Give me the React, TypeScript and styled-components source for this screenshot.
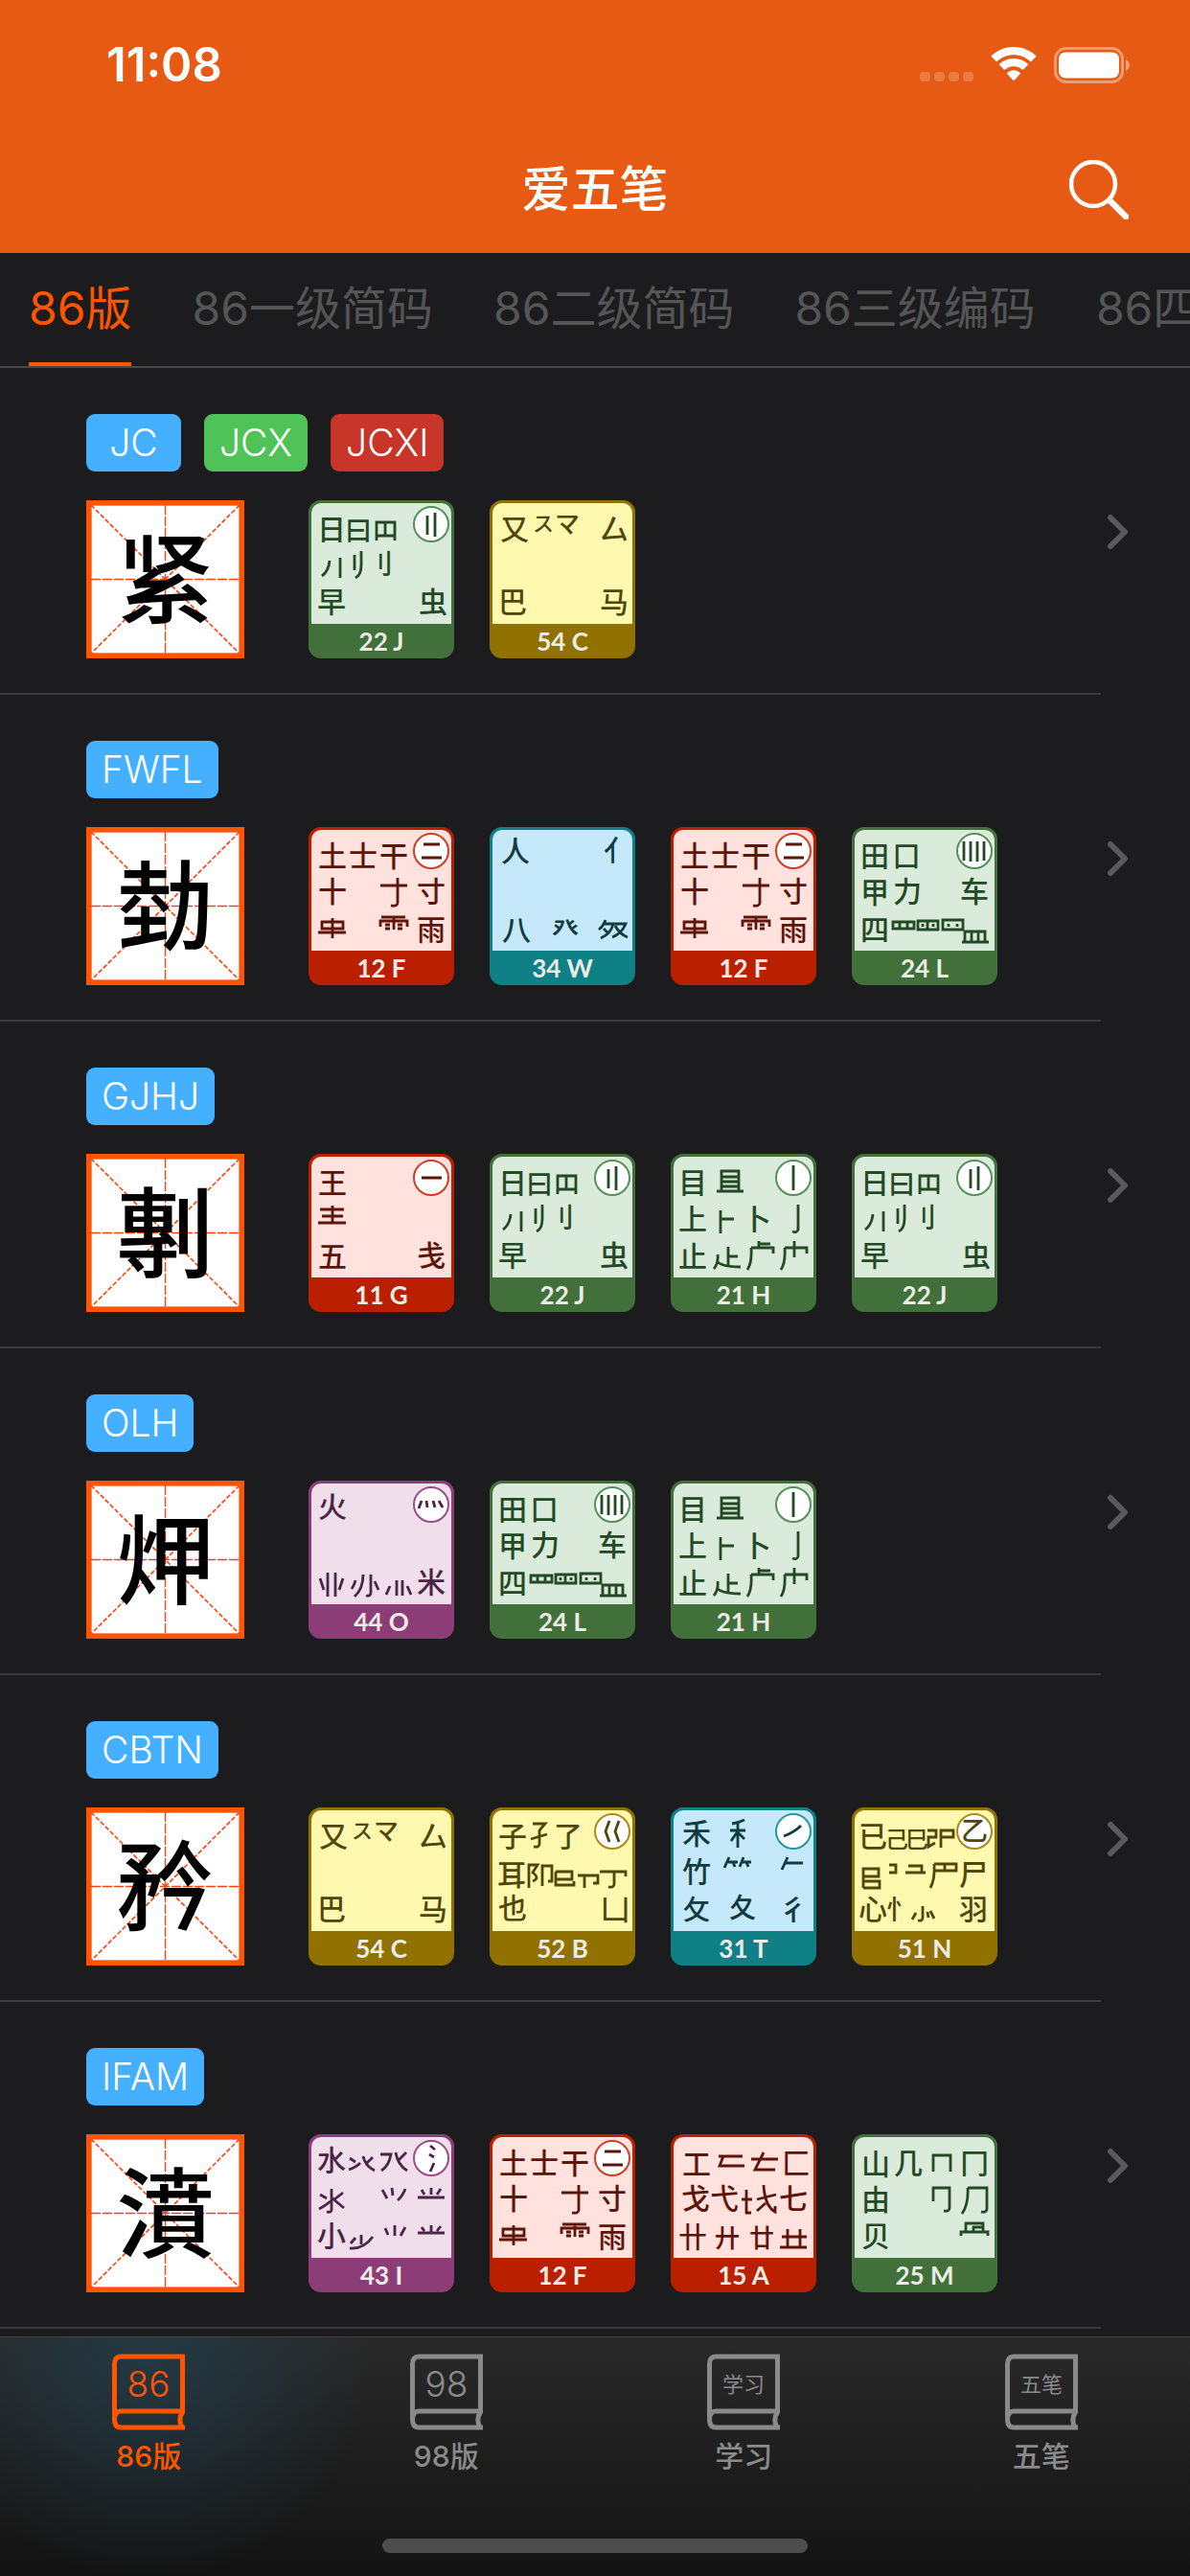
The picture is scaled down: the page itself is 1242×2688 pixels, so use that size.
import React from 'react';
import styled, { createGlobalStyle } from 'styled-components';

const GlobalStyle = createGlobalStyle`
  * { box-sizing: border-box; }
  html, body { margin: 0; background: #1c1c1e; }
  body { font-family: Inter, "Noto Sans CJK SC", sans-serif; color: #fff; }
  button { font: inherit; border: 0; background: none; padding: 0; cursor: pointer; }
  a { color: inherit; text-decoration: none; }
  svg { display: block; }
`;

/* ---------- page parts ---------- */

const Page = styled.div`
  min-height: 100vh;
  display: flex;
  flex-direction: column;
  overflow-x: hidden;
`;

const Header = styled.header`
  background: #e65a14;
  height: 264px;
`;

const StatusBar = styled.div`
  height: 136px;
  padding: 0 62px 0 111px;
  display: flex;
  justify-content: space-between;
  align-items: center;
`;

const Clock = styled.time`
  font-size: 49px;
  line-height: 60px;
  font-weight: 600;
`;

const StatusIcons = styled.div`
  display: flex;
  align-items: center;
`;

const NavBar = styled.div`
  height: 124px;
  padding: 0 64px;
  display: grid;
  grid-template-columns: 62px 1fr 62px;
  align-items: center;
`;

const Title = styled.h1`
  grid-column: 2;
  margin: 0;
  text-align: center;
  font-size: 51px;
  line-height: 72px;
  font-weight: 500;
`;

const TabStrip = styled.nav`
  display: flex;
  gap: 63px;
  height: 120px;
  padding: 0 30px;
  overflow: hidden;
  border-bottom: 2px solid #48484a;
`;

const StripTab = styled.button<{ $active?: boolean }>`
  flex: none;
  height: 118px;
  padding-top: 2px;
  white-space: nowrap;
  font-size: 48px;
  line-height: 72px;
  font-weight: 400;
  color: ${p => (p.$active ? '#ff5500' : '#555')};
  border-bottom: 4px solid ${p => (p.$active ? '#ff5500' : 'transparent')};
`;

const List = styled.ul`
  list-style: none;
  margin: 0;
  padding: 0;
`;

const Row = styled.a`
  display: grid;
  grid-template-columns: 1fr 93px;
  align-items: center;
`;

const RowBody = styled.div`
  display: flex;
  flex-direction: column;
  gap: 30px;
  padding: 48px 0 36px 90px;
  border-bottom: 2px solid #3a3a3c;
`;

const Tags = styled.div`
  display: flex;
  gap: 24px;
`;

const Tag = styled.span<{ $color: string }>`
  min-width: 99px;
  padding: 0 16px;
  border-radius: 9px;
  background: ${p => p.$color};
  font-size: 39px;
  line-height: 60px;
  font-weight: 300;
  text-align: center;
`;

const Pieces = styled.div`
  display: flex;
  align-items: center;
  gap: 67px;
`;

const Keys = styled.div`
  display: flex;
  gap: 37px;
`;

const Tile = styled.div`
  display: grid;
  width: 165px;
  height: 165px;
  border: 5px solid #ff5500;
  background: #fff;
  & > * { grid-area: 1 / 1; }
`;

const Hanzi = styled.span`
  color: #000;
  font-family: "Noto Sans CJK SC", sans-serif;
  font-size: 102px;
  line-height: 144px;
  font-weight: 500;
  text-align: center;
`;

const KeyCap = styled.figure<{ $edge: string; $face: string }>`
  margin: 0;
  width: 152px;
  height: 165px;
  overflow: hidden;
  border-radius: 13px;
  background: ${p => p.$edge};
  & > svg {
    border: 3px solid ${p => p.$edge};
    border-bottom: 0;
    border-radius: 13px 13px 0 0;
    background: ${p => p.$face};
  }
`;

const KeyCode = styled.figcaption`
  font-family: Lato, sans-serif;
  font-size: 26px;
  line-height: 36px;
  font-weight: 700;
  text-align: center;
  color: #ecece6;
`;

const TabBar = styled.footer`
  margin-top: auto;
  height: 250px;
  border-top: 1px solid #434345;
  background:
    radial-gradient(circle 230px at 155px 20px, rgba(32, 72, 92, 0.55), rgba(32, 72, 92, 0) 100%),
    linear-gradient(#292929, #131313);
`;

const TabBarItems = styled.nav`
  display: grid;
  grid-template-columns: repeat(4, 1fr);
  height: 210px;
  padding-top: 17px;
`;

const BarItem = styled.button<{ $active?: boolean }>`
  display: flex;
  flex-direction: column;
  align-items: center;
  gap: 7px;
  color: ${p => (p.$active ? '#ff5500' : '#8a8a8a')};
  font-size: 30px;
  line-height: 40px;
  font-weight: 500;
`;

const HomeIndicator = styled.div`
  width: 444px;
  height: 15px;
  margin: 0 auto;
  border-radius: 8px;
  background: #4d4d4d;
`;

/* ---------- icons ---------- */

const Dots = () => (
  <svg width="56" height="38" viewBox="0 0 56 38" fill="#fff" fillOpacity="0.2">
    {[0, 15, 30, 45].map(x => <rect key={x} x={x} y="26" width="11" height="10" rx="4" />)}
  </svg>
);

const Wifi = () => (
  <svg width="48" height="38" viewBox="0 0 48 38" fill="#fff" style={{ marginLeft: 18 }}>
    <path d="M24 8.2c6.6 0 12.700 2.600 17.200 6.800.4.400.9.300 1.200 0l4.700-4.700c.4-.4.4-.9 0-1.300C41 3.400 32.900 0 24 0S7 3.400.9 9c-.4.400-.4.900 0 1.300L5.600 15c.3.300.8.400 1.200 0C11.300 10.800 17.400 8.200 24 8.200z" />
    <path d="M24 20.300c3.400 0 6.500 1.200 8.900 3.300.3.300.8.300 1.200 0l4.600-4.700c.4-.4.4-1 0-1.300C34.800 14.200 29.700 12 24 12s-10.800 2.200-14.700 5.600c-.4.300-.4.900 0 1.300l4.600 4.700c.4.300.9.300 1.200 0 2.400-2.100 5.500-3.300 8.900-3.300z" />
    <path d="M30.600 27c.4.300.4.800 0 1.200l-6 6.500c-.4.400-.8.400-1.200 0l-6-6.500c-.4-.4-.4-.9 0-1.200 4-3.600 9.200-3.600 13.200 0z" />
  </svg>
);

const Battery = () => (
  <svg width="80" height="38" viewBox="0 0 80 38" style={{ marginLeft: 18 }}>
    <rect x="1.500" y="1.500" width="70" height="35" rx="11" fill="none" stroke="#fff" strokeOpacity="0.4" strokeWidth="3" />
    <rect x="5" y="5.500" width="63" height="27" rx="7" fill="#fff" />
    <path d="M75 13c5 2 5 10 0 12z" fill="#fff" fillOpacity="0.45" />
  </svg>
);

const SearchIcon = () => (
  <svg width="62" height="62" viewBox="0 0 62 62" fill="none" stroke="#fff" strokeLinecap="round">
    <circle cx="25" cy="25" r="23" strokeWidth="4.500" />
    <path d="M42 42 59 59" strokeWidth="6.500" />
  </svg>
);

const Chevron = () => (
  <svg width="35" height="38" viewBox="0 0 35 38" fill="none" stroke="#5a5a5e" strokeWidth="6" strokeLinecap="round" strokeLinejoin="round">
    <path d="M10 4 25 19 10 34" />
  </svg>
);

const BookIcon = ({ text, small }: { text: string; small?: boolean }) => (
  <svg width="78" height="80" viewBox="0 0 78 80" fill="none" stroke="currentColor" strokeWidth="5">
    <path d="M77 3H10Q3.500 3 3.500 11V68Q3.500 77 10 77H77" />
    <path d="M74.500 1V61Q69 69 74.500 78" />
    <path d="M3.500 68Q4 60 10 60H76" />
    <text x="39" y={small ? 40 : 45} textAnchor="middle" fill="currentColor" stroke="none" fontSize={small ? 22 : 37} fontWeight={small ? 400 : 300}>{text}</text>
  </svg>
);

const PracticeGrid = () => (
  <svg width="155" height="155" viewBox="0 0 155 155" fill="none" stroke="#ff4010">
    <rect x="0.500" y="0.500" width="154" height="154" strokeOpacity="0.6" />
    <path d="M0 77.500H155M77.500 0V155" strokeDasharray="10 2" strokeWidth="1.400" />
    <path d="M0 0 155 155M155 0 0 155" strokeDasharray="5 2" strokeWidth="1.600" />
  </svg>
);

/* ---------- key faces ---------- */

type Glyph = [char: string, x: number, y: number, size?: number];
interface KeyDef { code: string; tone: Tone; glyphs: Glyph[]; strokes?: string; ring?: string; ringGlyph?: string }
type Tone = 'green' | 'yellow' | 'red' | 'blue' | 'purple';

const tones: Record<Tone, { edge: string; face: string; ink: string; ring: string }> = {
  green: { edge: '#41703a', face: '#dbebdb', ink: '#234a25', ring: '#55905a' },
  yellow: { edge: '#917200', face: '#fff9b0', ink: '#51460c', ring: '#a88a1c' },
  red: { edge: '#ba1f00', face: '#ffe1dd', ink: '#5e150b', ring: '#d23c24' },
  blue: { edge: '#0f8085', face: '#c5e9fa', ink: '#103c40', ring: '#2a979b' },
  purple: { edge: '#8c3d78', face: '#f1deeb', ink: '#4a2547', ring: '#9a4c88' },
};

const keyDefs: Record<string, KeyDef> = {
  J: {
    code: '22 J', tone: 'green',
    glyphs: [['日', 24, 30], ['曰', 52, 31, 28], ['刂', 74, 66, 28], ['早', 24, 106], ['虫', 130, 106]],
    strokes: 'M71 42V23H90V42M71 37H90M80 23V37M22 63Q21 74 14 79M33 60V81M48 57V73M55 53V68Q55 78 49 81',
    ring: 'M124 16V36M132 13V38',
  },
  C: {
    code: '54 C', tone: 'yellow',
    glyphs: [['又', 26, 30], ['ス', 56, 24, 22], ['マ', 81, 24, 26], ['厶', 130, 30], ['巴', 24, 106], ['马', 130, 106]],
  },
  F: {
    code: '12 F', tone: 'red',
    glyphs: [['土', 25, 30], ['士', 57, 30], ['干', 89, 30], ['十', 25, 67], ['寸', 128, 67], ['雨', 128, 107]],
    strokes: 'M75 61H103M93 53V79Q93 83 86 82M14 99H36V106H14ZM10 110H39M25 95V116M76 94H101M75 104V98H103V104M89 94V107M80 102H85M80 106H85M93 102H98M93 106H98',
    ring: 'M120 18H137M118 32H139',
  },
  W: {
    code: '34 W', tone: 'blue',
    glyphs: [['人', 27, 25], ['亻', 134, 24], ['八', 28, 107], ['癶', 79, 106, 28]],
    strokes: 'M121 97Q119 103 114 107M120 101H129Q127 111 116 116M119 106 123 110M130 101H142Q138 111 128 115M131 103Q136 112 144 115',
  },
  L: {
    code: '24 L', tone: 'green',
    glyphs: [['田', 24, 30], ['囗', 57, 30, 28], ['甲', 24, 68], ['力', 58, 67], ['车', 128, 67], ['四', 24, 107]],
    strokes: 'M43 99H65V106H43ZM50 99V106M58 99V106M69 98H90V107H69ZM79 98V107M74 101V104M85 101V104M95 97H116V107H95ZM101 101V104M110 101V104M118 120V109H139V120M125 109V120M132 109V120M115 120H143',
    ring: 'M117 15V35M124 15V36M131 15V36M138 15V35',
  },
  G: {
    code: '11 G', tone: 'red',
    glyphs: [['王', 25, 30], ['五', 25, 107], ['戋', 128, 106]],
    strokes: 'M12 58H37M14 65H36M10 72H39M25 54V72',
    ring: 'M118 25H139',
  },
  H: {
    code: '21 H', tone: 'green',
    glyphs: [['目', 23, 30], ['上', 23, 68], ['卜', 90, 68], ['止', 23, 107]],
    strokes: 'M53 39V18H71V39M53 24H71M53 29H71M53 34H71M48 39H76M52 59V83M52 68H66M133 53V79Q132 83 127 81M49 105Q50 114 45 120M49 113Q55 118 73 118M60 97V117M60 107H70M84 98H107V104M84 98Q85 114 80 121M92 91V98M92 94H104M119 98H142V104M119 98Q120 114 115 121M129 91V108',
    ring: 'M128 12V38',
  },
  O: {
    code: '44 O', tone: 'purple',
    glyphs: [['火', 25, 27], ['米', 128, 106]],
    strokes: 'M20 96V121M28 96V121M12 102 16 114M36 102 32 114M57 98Q57 113 48 121M49 104Q48 109 45 113M65 98V117Q65 121 60 120M69 105 73 114M85 110 81 119M92 104V120M98 104V120M103 110 107 119',
    ring: 'M118 21 115 29M123 21 124 28M130 21 132 28M136 21 140 28',
  },
  B: {
    code: '52 B', tone: 'yellow',
    glyphs: [['子', 24, 30], ['了', 82, 30], ['耳', 23, 70], ['也', 24, 105], ['凵', 131, 106]],
    strokes: 'M45 17H58L52 24V38Q52 42 46 41M43 33 60 28M41 84V60H50L45 68Q53 74 45 77M55 82V61H65V77H61M69 67H86V75H69M69 67V81H88V77M92 71H113V79H108M99 71V84M115 67H142V72M130 67V80Q130 84 124 83',
    ring: 'M125 14 121 25 125 36M135 14 131 25 135 36',
  },
  T: {
    code: '31 T', tone: 'blue',
    glyphs: [['禾', 27, 27], ['竹', 27, 67], ['攵', 27, 106, 28], ['夂', 75, 104, 28], ['彳', 128, 106]],
    strokes: 'M77 13Q71 16 64 17M62 24H78M70 15V42M70 25 63 35M70 26 77 33M61 52 56 63M60 57H70M65 57 67 62M76 52 72 62M75 57H84M79 57 81 62M122 52 116 65M120 58H138',
    ring: 'M118 30Q129 26 136 19',
  },
  N: {
    code: '51 N', tone: 'yellow',
    glyphs: [['已', 22, 30], ['己', 47, 33, 24], ['巳', 68, 33, 24], ['尸', 127, 70], ['心', 22, 106], ['忄', 50, 106, 28], ['羽', 127, 106]],
    strokes: 'M79 24H88V31H80V41L87 37M93 42V24H106V31H93M12 84V64H28V72H12M12 77H29V84H12M39 60H46V68H39M59 61H73V68M56 68H77M86 59H109V66H86M97 59V66M86 59Q87 75 82 84M74 103V115Q74 119 69 118M67 110 63 117M79 109 80 115M82 108 86 116',
    ringGlyph: '乙',
  },
  I: {
    code: '43 I', tone: 'purple',
    glyphs: [['水', 24, 27], ['小', 24, 106]],
    strokes: 'M24 57V79Q24 82 19 81M12 63 19 67M11 78Q17 75 23 70M36 61 27 68M25 67 37 77M43 25 49 29M42 37Q49 35 54 30M67 24 60 31M57 23Q59 33 69 38M75 21H86Q84 33 76 38M102 19 94 27M91 19Q93 32 103 38M77 58 82 67M87 56 88 64M101 57Q98 65 93 69M118 58 121 63M128 56V63M138 57 134 63M114 66H142M55 105V115M49 108 44 114M67 107Q58 120 43 119M80 98 83 105M90 95V106M101 97 96 106M118 97 121 101M128 95V102M138 96 134 101M114 103H142',
    ring: 'M127 12 132 16M126 21 131 24M131 30 127 39',
  },
  A: {
    code: '15 A', tone: 'red',
    glyphs: [['工', 27, 31], ['匚', 131, 30], ['戈', 26, 67], ['弋', 56, 67], ['七', 128, 67], ['卄', 23, 107], ['廾', 59, 108, 26], ['廿', 95, 108, 26]],
    strokes: 'M50 23H75M55 23 51 33H77M84 26H112M97 19 88 37H109M79 58V82H84M74 68H85M90 68 110 63M97 53Q98 75 109 81V75M99 72 90 80M116 107H142M122 99V117M135 99V117M114 118H142',
  },
  M: {
    code: '25 M', tone: 'green',
    glyphs: [['山', 25, 31], ['几', 59, 30], ['冂', 128, 30], ['由', 25, 68], ['贝', 25, 106]],
    strokes: 'M85 39V22H103V39M85 70V56H102V77Q102 81 96 80M121 56H141V78Q141 82 135 81M121 56Q122 73 115 83M119 102V93H137V102M114 106V102H142V106M137 97H127V102',
  },
};

const KeyView = ({ letter }: { letter: string }) => {
  const def = keyDefs[letter];
  const tone = tones[def.tone];
  const ringed = def.ring || def.ringGlyph;
  return (
    <KeyCap $edge={tone.edge} $face={tone.face}>
      <svg width="152" height="129" viewBox="3 3 146 126" fontFamily='"Noto Sans CJK SC", sans-serif' fontWeight="500" fill={tone.ink} textAnchor="middle">
        {def.glyphs.map(([char, x, y, size = 30]) => (
          <text key={char} x={x} y={Math.round(y + size * 0.38)} fontSize={size}>{char}</text>
        ))}
        {def.strokes && <path d={def.strokes} fill="none" stroke={tone.ink} strokeWidth="2.800" />}
        {ringed && <circle cx="128" cy="25" r="18" fill="#fff" stroke={tone.ring} strokeWidth="2" />}
        {def.ring && <path d={def.ring} fill="none" stroke={tone.ink} strokeWidth="2.800" />}
        {def.ringGlyph && <text x="128" y="35" fontSize="28">{def.ringGlyph}</text>}
      </svg>
      <KeyCode>{def.code}</KeyCode>
    </KeyCap>
  );
};

/* ---------- data ---------- */

const tagColors = ['#44b0ff', '#4fc258', '#c83529'];

const entries = [
  { hanzi: '紧', tags: ['JC', 'JCX', 'JCXI'], keys: 'JC' },
  { hanzi: '勎', tags: ['FWFL'], keys: 'FWFL' },
  { hanzi: '剸', tags: ['GJHJ'], keys: 'GJHJ' },
  { hanzi: '炠', tags: ['OLH'], keys: 'OLH' },
  { hanzi: '矜', tags: ['CBTN'], keys: 'CBTN' },
  { hanzi: '濆', tags: ['IFAM'], keys: 'IFAM' },
];

const stripTabs = ['86版', '86一级简码', '86二级简码', '86三级编码', '86四级编码'];

const barItems = [
  { icon: '86', label: '86版' },
  { icon: '98', label: '98版' },
  { icon: '学习', label: '学习', small: true },
  { icon: '五笔', label: '五笔', small: true },
];

export default function App() {
  return (
    <Page>
      <GlobalStyle />
      <Header>
        <StatusBar>
          <Clock>11:08</Clock>
          <StatusIcons><Dots /><Wifi /><Battery /></StatusIcons>
        </StatusBar>
        <NavBar>
          <Title>爱五笔</Title>
          <button type="button" aria-label="搜索"><SearchIcon /></button>
        </NavBar>
      </Header>
      <TabStrip>
        {stripTabs.map((name, i) => <StripTab key={name} type="button" $active={i === 0}>{name}</StripTab>)}
      </TabStrip>
      <List>
        {entries.map(entry => (
          <li key={entry.hanzi}>
            <Row href={`#${entry.hanzi}`}>
              <RowBody>
                <Tags>
                  {entry.tags.map((tag, i) => <Tag key={tag} $color={tagColors[i]}>{tag}</Tag>)}
                </Tags>
                <Pieces>
                  <Tile><PracticeGrid /><Hanzi>{entry.hanzi}</Hanzi></Tile>
                  <Keys>{[...entry.keys].map((k, i) => <KeyView key={i} letter={k} />)}</Keys>
                </Pieces>
              </RowBody>
              <Chevron />
            </Row>
          </li>
        ))}
      </List>
      <TabBar>
        <TabBarItems>
          {barItems.map((item, i) => (
            <BarItem key={item.label} type="button" $active={i === 0}>
              <BookIcon text={item.icon} small={item.small} />
              {item.label}
            </BarItem>
          ))}
        </TabBarItems>
        <HomeIndicator />
      </TabBar>
    </Page>
  );
}
